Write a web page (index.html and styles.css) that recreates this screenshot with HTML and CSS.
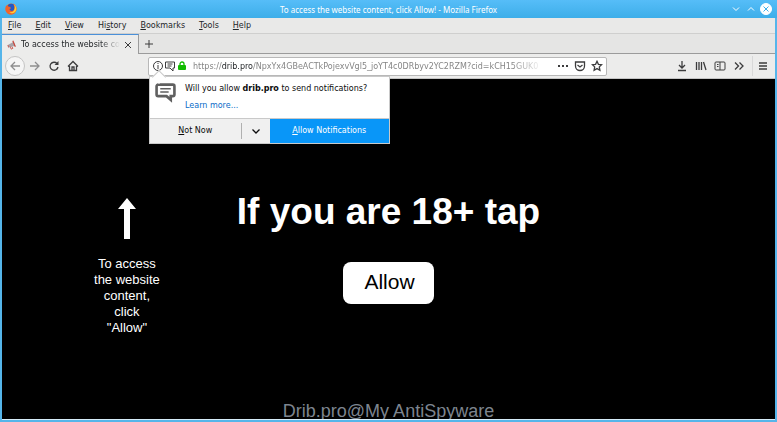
FILE: index.html
```
<!DOCTYPE html>
<html lang="en">

<head>
    <meta charset="utf-8">
    <title>To access the website content, click Allow!</title>
    <link rel="stylesheet" href="styles.css">
</head>

<body>
    <div class="window">
        <header class="titlebar">
            <svg class="logo" viewBox="0 0 24 24">
                <circle cx="12" cy="12" r="11" fill="#f57c1a" />
                <circle cx="12.500" cy="9.500" r="8" fill="#2458c5" />
                <path d="M2 5C3 6 5 5 7 7C10 7 12 9 12 11C9 10 8 13 11 15C16 18 20 13 19 8C18 4 17 3 16 1C22 4 24 9 23 14C21 21 15 24 10 23C3 21 0 15 1 10Z" fill="#f0642c" />
                <path d="M18 2C23 7 24 13 21 17C18 21 12 22 8 18C13 20 18 17 19 12C20 8 19 5 18 2Z" fill="#ffcf35" />
            </svg>
            <span class="title">To access the website content, click Allow! - Mozilla Firefox</span>
            <div class="windowBtns">
                <button aria-label="Minimize"><svg viewBox="0 0 12 12"><path d="M3 4.500l3 3 3-3" /></svg></button>
                <button aria-label="Maximize"><svg viewBox="0 0 12 12"><path d="M3 7.500l3-3 3 3" /></svg></button>
                <button aria-label="Close"><svg viewBox="0 0 12 12"><circle class="closeDisc" cx="6" cy="6" r="5.500" /><path class="closeCross" d="M3.500 3.500l5 5M8.500 3.500l-5 5" /></svg></button>
            </div>
        </header>

        <nav class="menubar">
            <button><u>F</u>ile</button>
            <button><u>E</u>dit</button>
            <button><u>V</u>iew</button>
            <button>Hi<u>s</u>tory</button>
            <button><u>B</u>ookmarks</button>
            <button><u>T</u>ools</button>
            <button><u>H</u>elp</button>
        </nav>

        <div class="tabs">
            <div class="tab">
                <svg class="favicon" viewBox="0 0 12 12">
                    <path d="M1 6l7-4 2 5-8 2z" fill="#a9a3a8" />
                    <path d="M7 1l3 7" stroke="#c6493f" stroke-width="1.500" />
                    <path d="M1 6l1 3M4 8l1 3 2-1-1-2" stroke="#c6493f" fill="none" />
                </svg>
                <span class="tabTitle">To access the website co</span>
                <button aria-label="Close tab"><svg class="tabClose" viewBox="0 0 8 8"><path d="M1 1l6 6M7 1l-6 6" /></svg></button>
            </div>
            <button class="newTab" aria-label="New tab"><svg viewBox="0 0 10 10"><path d="M5 1v8M1 5h8" /></svg></button>
        </div>

        <div class="toolbar">
            <div class="navBtns">
                <button class="back" aria-label="Back"><svg viewBox="0 0 12 12"><path d="M11 6H2M6 2L2 6l4 4" /></svg></button>
                <button class="forward" aria-label="Forward"><svg viewBox="0 0 12 12"><path d="M1 6h9M6 2l4 4-4 4" /></svg></button>
                <button aria-label="Reload"><svg viewBox="0 0 12 12"><path d="M9 3.500A4 4 0 1 0 10 7" /><path class="filled" d="M10.500 1v4h-4z" /></svg></button>
                <button aria-label="Home"><svg viewBox="0 0 12 12"><path d="M1 6.500L6 1.500l5 5M2.500 6v4.500h7V6M5 10V7h2v3" /></svg></button>
            </div>

            <div class="urlbar">
                <svg class="thin" viewBox="0 0 12 12"><circle cx="6" cy="6" r="4.500" /><path d="M6 5v4M6 3v1" /></svg>
                <svg class="thin" viewBox="0 0 12 12"><path d="M1.500 2h9v6H9v3L6 8H1.500zM3.500 4h5M3.500 6h4" /></svg>
                <svg viewBox="0 0 12 12"><path class="lock" d="M4 5.500V4a2 2 0 0 1 4 0v1.500" /><rect class="lockBody" x="2" y="5" width="8" height="5" rx="1" /></svg>
                <span class="url">https://<b>drib.pro</b>/NpxYx4GBeACTkPojexvVgl5_joYT4c0DRbyv2YC2RZM?cid=kCH15GUK0</span>
                <button aria-label="Page actions"><svg viewBox="0 0 12 12"><path class="dots" d="M1 5h2v2H1zM5 5h2v2H5zM9 5h2v2H9z" /></svg></button>
                <button aria-label="Save to Pocket"><svg viewBox="0 0 12 12"><path d="M1.500 2h9v4a4.500 4.500 0 0 1-9 0zM3.500 5L6 7l2.500-2" /></svg></button>
                <button aria-label="Bookmark this page"><svg viewBox="0 0 12 12"><path d="M6 1.300l1.400 3 3.200.4-2.300 2.200.6 3.300L6 8.600l-2.900 1.600.6-3.300L1.400 4.700l3.200-.4z" /></svg></button>

                <section class="popup">
                    <div class="popupBody">
                        <svg class="bubble" viewBox="0 0 20 20"><path d="M3 2.500h14a1.500 1.500 0 0 1 1.500 1.500v8a1.500 1.500 0 0 1-1.500 1.500h-2V17l-4-3.500H3A1.500 1.500 0 0 1 1.500 12V4A1.500 1.500 0 0 1 3 2.500z" /><path class="lines" d="M5 6.500h10M5 9.500h8" /></svg>
                        <div>
                            <p>Will you allow <b>drib.pro</b> to send notifications?</p>
                            <a href="#">Learn more...</a>
                        </div>
                    </div>
                    <div class="popupBtns">
                        <button class="notNow"><u>N</u>ot Now</button>
                        <button class="more" aria-label="More options"><svg viewBox="0 0 12 12"><path d="M2.500 4.500L6 8l3.500-3.500" /></svg></button>
                        <button class="allowBtn"><u>A</u>llow Notifications</button>
                    </div>
                </section>
            </div>

            <div class="toolBtns">
                <button aria-label="Downloads"><svg viewBox="0 0 12 12"><path d="M6 1v7M3 5l3 3 3-3M2 10.500h8" /></svg></button>
                <button aria-label="Library"><svg viewBox="0 0 12 12"><path d="M1.500 2v8M4 2v8M6.500 2v8M8.500 2l2.500 8" /></svg></button>
                <button aria-label="Sidebar"><svg class="thin" viewBox="0 0 12 12"><rect x="1" y="2" width="10" height="8" rx="1" /><path d="M6 2v8M3 4.500h1.500M3 6.500h1.500" /></svg></button>
                <button aria-label="More tools"><svg viewBox="0 0 12 12"><path d="M2 2.500L5.500 6 2 9.500M6.500 2.500L10 6 6.500 9.500" /></svg></button>
                <button class="burger" aria-label="Open menu"><svg viewBox="0 0 12 12"><path d="M2 3h8M2 6h8M2 9h8" /></svg></button>
            </div>
        </div>

        <main class="page">
            <aside class="hint">
                <svg class="arrow" viewBox="0 0 20 42"><path d="M10 0l9 11h-6v30H7V11H1z" /></svg>
                <p>To access<br>the website<br>content,<br>click<br>"Allow"</p>
            </aside>
            <div class="prompt">
                <h1>If you are 18+ tap</h1>
                <button class="bigAllow">Allow</button>
            </div>
            <footer class="watermark">Drib.pro@My AntiSpyware</footer>
        </main>
    </div>
</body>

</html>
```
FILE: styles.css
```
* {
    box-sizing: border-box;
}

body {
    margin: 0;
    font-family: "DejaVu Sans", sans-serif;
    font-size: 8px;
    color: #232629;
}

button {
    margin: 0;
    padding: 0;
    border: none;
    background: none;
    font: inherit;
    color: inherit;
}

p, h1 {
    margin: 0;
}

svg {
    display: block;
    flex: none;
    width: 12px;
    height: 12px;
    fill: none;
    stroke: #3c3c3d;
}

.window {
    display: flex;
    flex-direction: column;
    height: 100vh;
    padding: 0 2px 2px;
    background: #55b5ea;
}

/* title bar */
.titlebar {
    display: grid;
    grid-template-columns: 1fr auto 1fr;
    align-items: center;
    height: 18px;
    margin: 0 -2px;
    padding: 0 5px;
    background: linear-gradient(#56bdf8, #3daee9);
    color: #fff;
}

.title {
    font-family: "Noto Sans", sans-serif;
}

.logo {
    stroke: none;
}

.windowBtns {
    display: flex;
    justify-content: flex-end;
    gap: 3px;
}

.windowBtns svg {
    stroke: #fff;
}

.windowBtns .closeDisc {
    fill: #fff;
}

.windowBtns .closeCross {
    stroke: #3daee9;
}

/* menu */
.menubar {
    display: flex;
    gap: 14px;
    height: 16px;
    padding: 0 6px;
    background: #e9e9e8;
    border-bottom: 1px solid #cfcfce;
}

/* tabs */
.tabs {
    display: flex;
    height: 20px;
    background: #e5e5e4;
}

.tab {
    display: flex;
    align-items: center;
    gap: 4px;
    width: 137px;
    padding: 0 6px 0 5px;
    background: #ececeb;
    border-top: 1px solid #4a90d9;
    border-right: 1px solid #9b9b9b;
}

.favicon {
    width: 10px;
    stroke: none;
}

.tabTitle {
    flex: 1;
    white-space: nowrap;
    -webkit-mask-image: linear-gradient(to right, #000 80%, transparent);
    mask-image: linear-gradient(to right, #000 80%, transparent);
}

.tabClose {
    width: 8px;
    height: 8px;
}

.newTab {
    flex: 1;
    padding-left: 5px;
    border-bottom: 1px solid #9b9b9b;
}

.newTab svg {
    width: 10px;
    height: 10px;
}

/* toolbar */
.toolbar {
    display: flex;
    align-items: center;
    height: 25px;
    background: #ececeb;
    border-bottom: 1px solid #c4c4c4;
}

.toolbar svg {
    stroke-width: 1.300;
}

.toolbar .thin {
    stroke-width: 1;
}

.navBtns {
    display: flex;
    align-items: center;
    gap: 7px;
    width: 146px;
    padding-left: 3px;
}

.back {
    margin-right: -3px;
    padding: 3px;
    border: 1px solid #c4c4c4;
    border-radius: 50%;
    background: #f5f5f5;
}

.back svg, .forward svg {
    stroke: #8e8e8f;
}

.filled {
    fill: #3c3c3d;
    stroke: none;
}

.urlbar {
    position: relative;
    display: flex;
    align-items: center;
    width: 459px;
    height: 19px;
    padding: 0 3px;
    background: #fff;
    border: 1px solid #b8b8b8;
    border-radius: 2px;
}

.urlbar .lock {
    stroke: #12bc00;
}

.urlbar .lockBody {
    fill: #12bc00;
    stroke: none;
}

.toolbar .dots {
    fill: #3c3c3d;
    stroke: none;
}

.url {
    flex: 1;
    margin: 0 9px 0 5px;
    white-space: nowrap;
    color: #858585;
    -webkit-mask-image: linear-gradient(to right, #000 91%, transparent);
    mask-image: linear-gradient(to right, #000 91%, transparent);
}

.url b {
    font-weight: normal;
    color: #232629;
}

.urlbar button {
    margin-left: 5px;
}

.toolBtns {
    display: flex;
    align-items: center;
    justify-content: flex-end;
    flex: 1;
    gap: 7px;
    padding-right: 6px;
}

.burger {
    padding: 4px 0 4px 4px;
    border-left: 1px solid #d8d8d8;
}

/* notification popup */
.popup {
    position: absolute;
    top: 18px;
    left: 0;
    width: 241px;
    background: #fff;
    border: 1px solid #c9c9c9;
    color: #0c0c0d;
}

.popup::before {
    content: "";
    position: absolute;
    top: -5px;
    left: 4px;
    width: 9px;
    height: 9px;
    border: 1px solid #c9c9c9;
    border-width: 1px 0 0 1px;
    background: #fff;
    transform: rotate(45deg);
}

.popupBody {
    display: flex;
    gap: 9px;
    height: 41px;
    padding: 5px;
}

.toolbar .bubble {
    width: 21px;
    height: 21px;
    stroke: #606060;
    stroke-width: 2.500;
}

.toolbar .bubble .lines {
    stroke-width: 1.500;
}

.popupBody p {
    line-height: 14px;
    white-space: nowrap;
}

.popupBody a {
    line-height: 20px;
    color: #0a6cc8;
    text-decoration: none;
}

.popupBtns {
    display: flex;
    height: 25px;
    background: #f0f0f0;
    border-top: 1px solid #c9c9c9;
}

.popup button {
    margin: 0;
}

.popup .notNow {
    flex: 1;
}

.popup .more {
    width: 29px;
    margin: 4px 0;
    border-left: 1px solid #b0b0b0;
}

.more svg {
    margin: 0 auto;
    stroke: #0c0c0d;
}

.allowBtn {
    width: 50%;
    background: #0996f8;
    color: #fff;
}

/* page */
.page {
    display: grid;
    grid-template-columns: 1fr auto 1fr;
    grid-template-rows: 1fr auto;
    flex: 1;
    min-height: 0;
    overflow: hidden;
    background: #000;
    border-bottom: 1px solid #d6ecf8;
    color: #fff;
    font-family: "Liberation Sans", Arial, sans-serif;
}

.hint {
    padding: 119px 0 0 15px;
    font-size: 13px;
    line-height: 16px;
    text-align: center;
}

.arrow {
    width: 20px;
    height: 42px;
    margin: 0 auto 16px;
    fill: #fff;
    stroke: none;
}

.prompt {
    padding-top: 112px;
    text-align: center;
}

.prompt h1 {
    font-size: 37px;
    line-height: 42px;
    white-space: nowrap;
}

.bigAllow {
    width: 91px;
    height: 42px;
    margin-top: 29px;
    padding: 0 0 2px 2px;
    background: #fff;
    border-radius: 8px;
    color: #000;
    font-size: 21px;
}

.watermark {
    grid-column: 1 / -1;
    height: 18px;
    color: #7d858f;
    font-size: 18px;
    line-height: 20px;
    text-align: center;
}
```
